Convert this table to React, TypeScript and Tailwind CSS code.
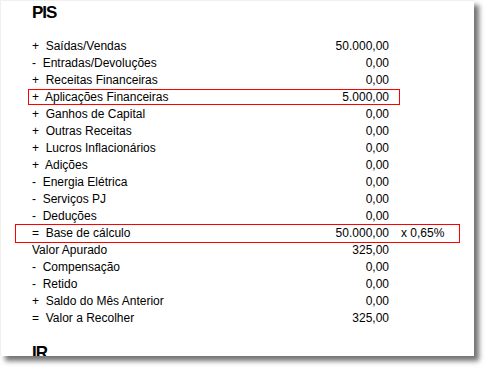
import React from "react";

const rows: { label: string; value: string; extra?: string }[] = [
  { label: "+  Saídas/Vendas", value: "50.000,00" },
  { label: "-  Entradas/Devoluções", value: "0,00" },
  { label: "+  Receitas Financeiras", value: "0,00" },
  { label: "+  Aplicações Financeiras", value: "5.000,00" },
  { label: "+  Ganhos de Capital", value: "0,00" },
  { label: "+  Outras Receitas", value: "0,00" },
  { label: "+  Lucros Inflacionários", value: "0,00" },
  { label: "+  Adições", value: "0,00" },
  { label: "-  Energia Elétrica", value: "0,00" },
  { label: "-  Serviços PJ", value: "0,00" },
  { label: "-  Deduções", value: "0,00" },
  { label: "=  Base de cálculo", value: "50.000,00", extra: "x 0,65%" },
  { label: "Valor Apurado", value: "325,00" },
  { label: "-  Compensação", value: "0,00" },
  { label: "-  Retido", value: "0,00" },
  { label: "+  Saldo do Mês Anterior", value: "0,00" },
  { label: "=  Valor a Recolher", value: "325,00" },
];

export default function App() {
  return (
    <div
      className="w-[488px] h-[370px] bg-white overflow-hidden"
      style={{ fontFamily: '"Liberation Sans", Arial, sans-serif' }}
    >
      <div className="relative w-[474px] h-[356px] bg-white overflow-hidden border-t border-l border-[#f0f0f0] shadow-[5px_5px_5px_rgba(0,0,0,0.55)]">
        <div className="pl-[31px] pt-[2px]">
          <div className="text-[17px] leading-[20px] font-bold tracking-[-1px] text-black">PIS</div>
          <div className="mt-[15px] text-[12px] leading-[17px] text-black">
            {rows.map((r, i) => (
              <div key={i} className="flex items-center h-[17px]">
                <div className="w-[357px] flex justify-between whitespace-pre">
                  <span>{r.label}</span>
                  <span>{r.value}</span>
                </div>
                {r.extra && <span className="ml-[12px]">{r.extra}</span>}
              </div>
            ))}
          </div>
          <div className="mt-[16px] text-[17px] leading-[20px] font-bold tracking-[-1px] text-black">IR</div>
        </div>
        <div className="absolute left-[27px] top-[88px] w-[372px] h-[16px] border border-[#ff0000]" />
        <div className="absolute left-[14px] top-[223px] w-[445px] h-[19px] border border-[#ff0000]" />
      </div>
    </div>
  );
}
